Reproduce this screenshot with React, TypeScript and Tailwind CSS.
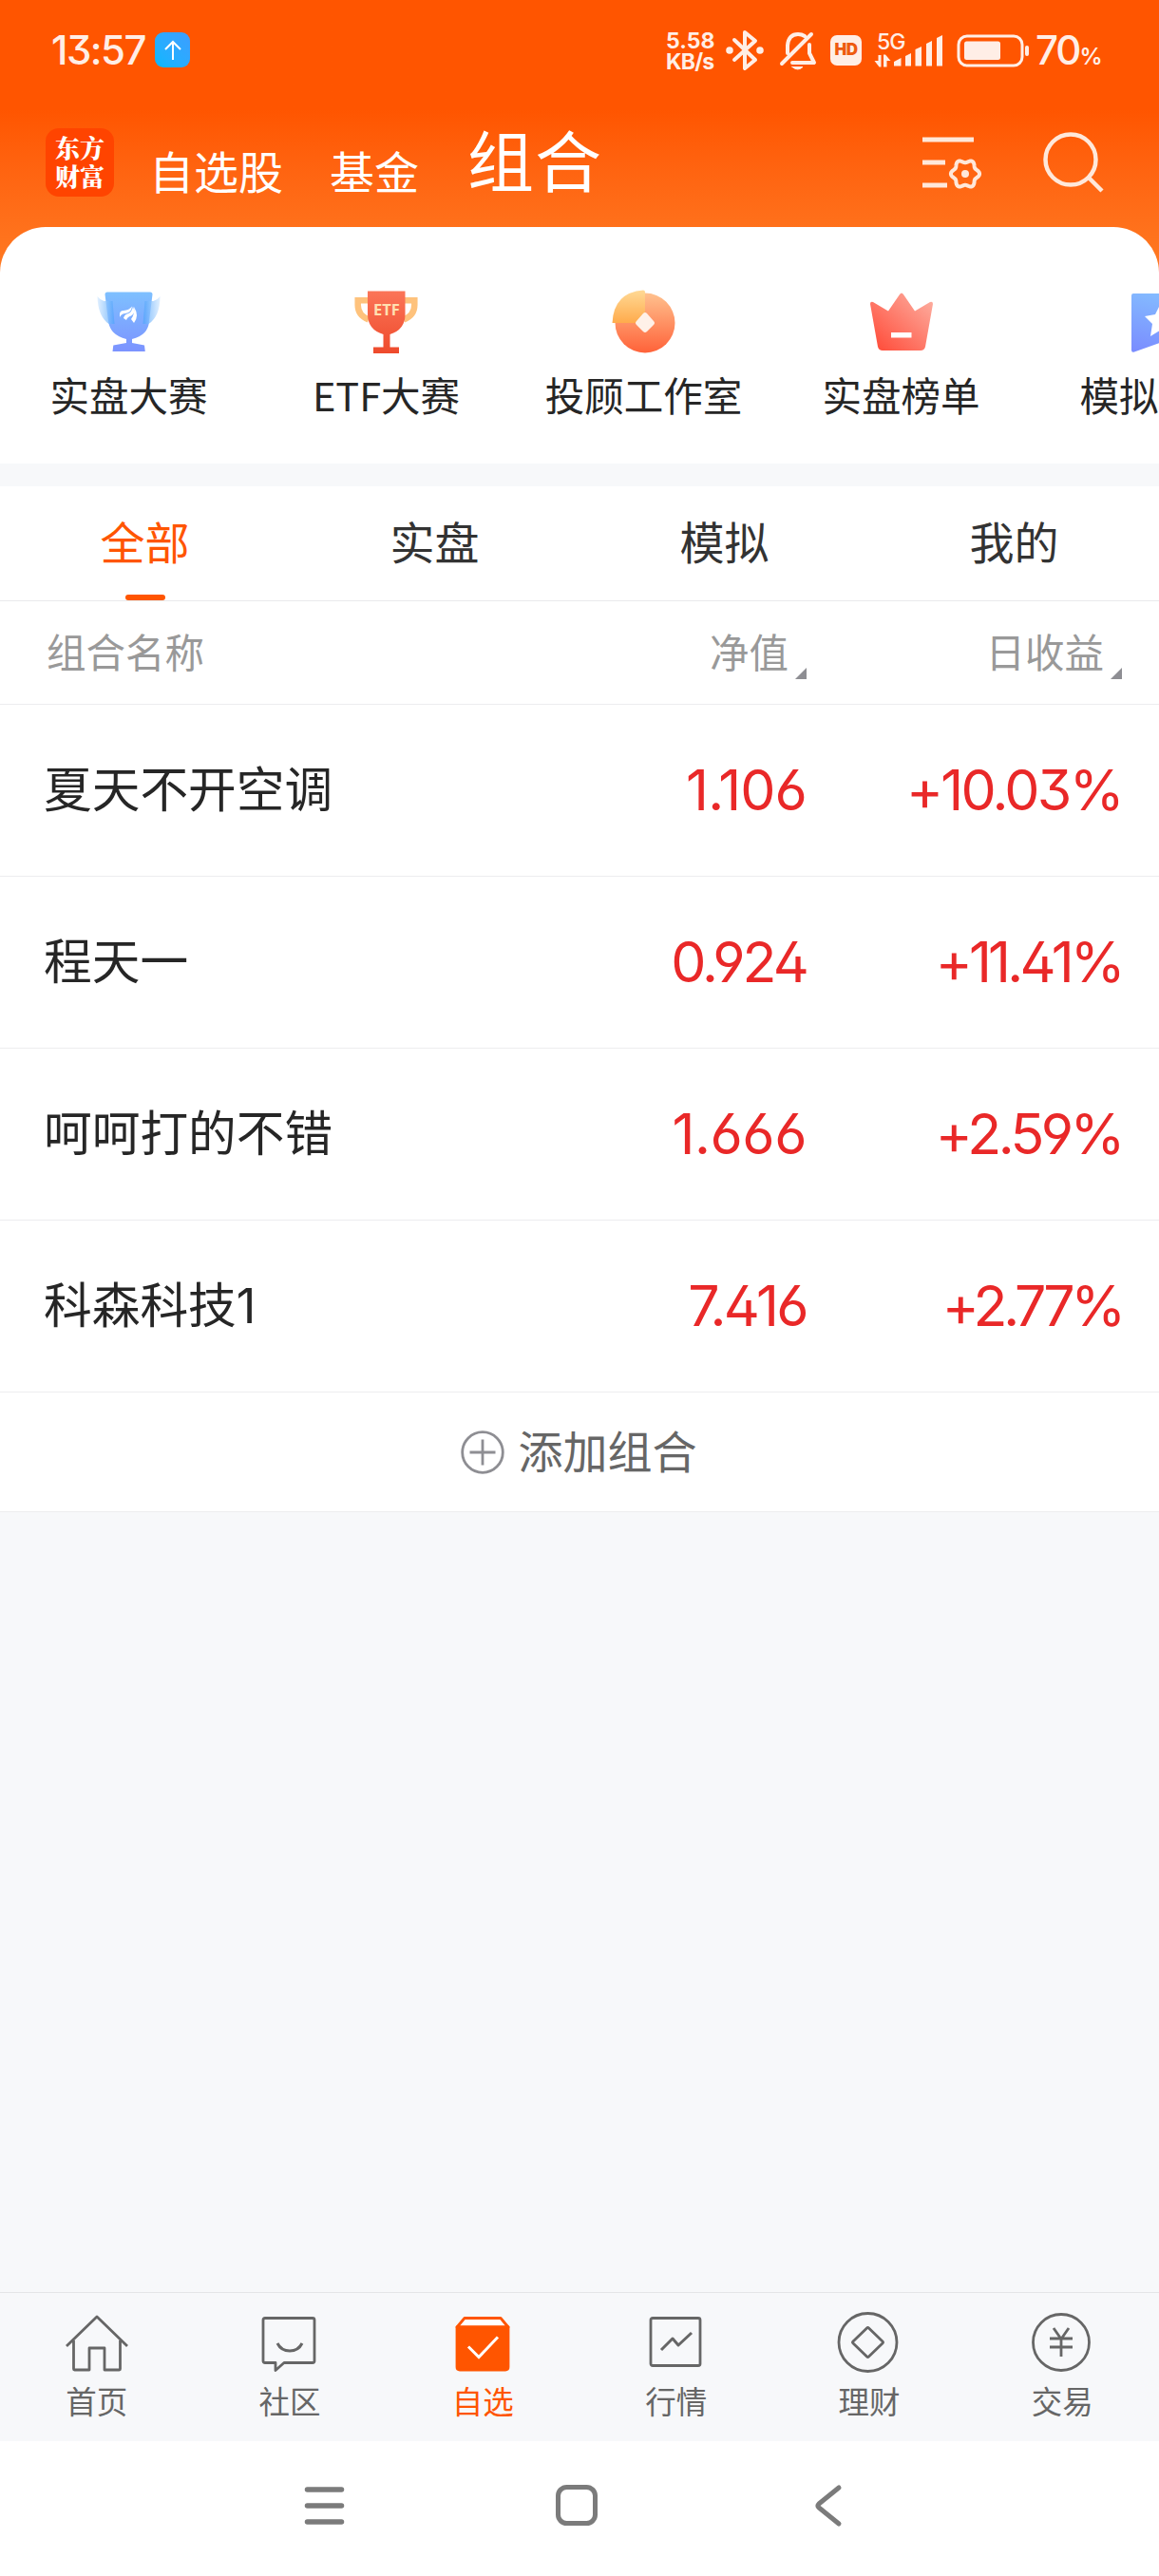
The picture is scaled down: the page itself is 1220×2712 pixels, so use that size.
import type { ReactNode } from 'react';

const quickLinks = [
  { label: '实盘大赛', icon: <BlueTrophy /> },
  { label: 'ETF大赛', icon: <EtfTrophy /> },
  { label: '投顾工作室', icon: <Coin /> },
  { label: '实盘榜单', icon: <Crown /> },
  { label: '模拟大赛', icon: <Flag /> },
];

const tabs = ['全部', '实盘', '模拟', '我的'];

const portfolios = [
  { name: '夏天不开空调', value: '1.106', valueTracking: 'tracking-[-0.9px]', daily: '+10.03%', dailyTracking: 'tracking-[-2.7px]' },
  { name: '程天一', value: '0.924', valueTracking: 'tracking-[-2.9px]', daily: '+11.41%', dailyTracking: 'tracking-[-3.8px]' },
  { name: '呵呵打的不错', value: '1.666', valueTracking: 'tracking-[-0.5px]', daily: '+2.59%', dailyTracking: 'tracking-[-3.5px]' },
  { name: '科森科技1', value: '7.416', valueTracking: 'tracking-[-2.7px]', daily: '+2.77%', dailyTracking: 'tracking-[-4.3px]' },
];

const navItems = [
  { label: '首页', icon: <HomeIcon /> },
  { label: '社区', icon: <ChatIcon /> },
  { label: '自选', icon: <BoxIcon />, active: true },
  { label: '行情', icon: <ChartIcon /> },
  { label: '理财', icon: <DiamondIcon /> },
  { label: '交易', icon: <YuanIcon /> },
];

// Contorno del engranaje: círculo con seis lóbulos
const gearPoints = Array.from({ length: 72 }, (_, i) => {
  const a = (i * Math.PI) / 36;
  const r = 13.4 + 1.7 * Math.cos(6 * a);
  return `${(46 + r * Math.cos(a)).toFixed(2)},${(48 + r * Math.sin(a)).toFixed(2)}`;
}).join(' ');

function BlueTrophy() {
  return (
    <svg className="w-20 h-20" viewBox="0 0 80 80">
      <defs>
        <linearGradient id="cup" x1="0" y1="0" x2="0" y2="1">
          <stop offset="0" stopColor="#7ec0ff" />
          <stop offset="1" stopColor="#7c93ff" />
        </linearGradient>
        <linearGradient id="wingL" x1="0" y1="0" x2="1" y2="0">
          <stop offset="0" stopColor="#d8ebff" />
          <stop offset="1" stopColor="#4fa3fb" />
        </linearGradient>
        <linearGradient id="wingR" x1="1" y1="0" x2="0" y2="0">
          <stop offset="0" stopColor="#d8ebff" />
          <stop offset="1" stopColor="#4fa3fb" />
        </linearGradient>
      </defs>
      <path d="M17 8.500h45q2.500 0 2.500 2.500L61 39q-1 15-18 19v4l13 2.500.8 6.500H22.500l.8-6.500L37 62v-4Q20 54 18 39L14.500 11q0-2.500 2.500-2.500z" fill="url(#cup)" />
      <path d="M6.500 13q3 4 7 5h9l2 24h-6Q7 34 6.500 13z" fill="url(#wingL)" opacity=".75" />
      <path d="M72.500 13q-3 4-7 5h-9l-2 24h6q12-8 12-29z" fill="url(#wingR)" opacity=".75" />
      <path d="M30 32q0-4 4-4 6-.5 9-4.500-1 7-7 7.500-4 0-6 4zM34 36q1-4 4-4.500 5-1.500 6-8 3 7-2 10-4 1-5 4.500zM45 24q3 5 3 9t-3 8l-3-4q4-5 3-13z" fill="#fff" />
    </svg>
  );
}

function EtfTrophy() {
  return (
    <svg className="w-20 h-20" viewBox="0 0 80 80">
      <defs>
        <linearGradient id="etf" x1="0" y1="0" x2="0" y2="1">
          <stop offset="0" stopColor="#fb7558" />
          <stop offset="1" stopColor="#ee4a2c" />
        </linearGradient>
      </defs>
      <path d="M22 17.200H9.700V22q0 11 11.300 15.500M57 17.200h12.300V22q0 11-11.300 15.500" fill="none" stroke="#fec27c" strokeWidth="6.500" />
      <path d="M20 7.500h39.500V32q0 16-16 21v13.500H53V73H26v-6.500h10.500V53Q20 48 20 32z" fill="url(#etf)" />
      <text x="40" y="33" textAnchor="middle" className="font-['Open_Sans',sans-serif] text-[16.500px] font-bold" fill="#ffe0b0">ETF</text>
    </svg>
  );
}

function Coin() {
  return (
    <svg className="w-20 h-20" viewBox="0 0 80 80">
      <defs>
        <linearGradient id="coin" x1="0" y1="0" x2="0" y2="1">
          <stop offset="0" stopColor="#ffc18e" />
          <stop offset="1" stopColor="#ff6239" />
        </linearGradient>
        <linearGradient id="slice" x1="0" y1="0" x2="0" y2="1">
          <stop offset="0" stopColor="#ffd995" />
          <stop offset="1" stopColor="#ffab4c" />
        </linearGradient>
      </defs>
      <circle cx="41" cy="41" r="31.500" fill="url(#coin)" />
      <path d="M41 41H6.500Q8 9 39 6.500q2 0 2 2z" fill="url(#slice)" />
      <path d="M39 31q2-2 4 0l7 8q2 2 0 4l-7 7q-2 2-4 0l-7-7q-2-2 0-4z" fill="#fff1e8" />
    </svg>
  );
}

function Crown() {
  return (
    <svg className="w-20 h-20" viewBox="0 0 80 80">
      <defs>
        <linearGradient id="crown" x1="0" y1="1" x2="1" y2="0">
          <stop offset=".1" stopColor="#ff513f" />
          <stop offset="1" stopColor="#fdb3a5" />
        </linearGradient>
      </defs>
      <path d="M7 21q0-3 3-2l16 9.500L38 11q2-3 4 0l12 17.500L70 19q3-1 3 2l-8 45q-1 4-5 4H20q-4 0-5-4z" fill="url(#crown)" />
      <path d="M29 51h21.500v5.500H29z" fill="#fff" />
    </svg>
  );
}

function Flag() {
  return (
    <svg className="w-20 h-20" viewBox="0 0 80 80">
      <defs>
        <linearGradient id="flag" x1=".4" y1="0" x2=".2" y2="1">
          <stop offset="0" stopColor="#84baff" />
          <stop offset="1" stopColor="#7a8dff" />
        </linearGradient>
      </defs>
      <path d="M13 10h54q2 0 2 2v60L41 62 14 71.500q-3 1-3-2V12q0-2 2-2z" fill="url(#flag)" />
      <path d="M41 22l5 10 11 2-8 8 2 13-10-6-10 6 2-13-8-8 11-2z" fill="#fff" />
    </svg>
  );
}

function NavSvg({ children }: { children: ReactNode }) {
  return (
    <svg className="w-[70px] h-[70px]" viewBox="0 0 70 70" fill="none" stroke="currentColor" strokeWidth="2.800" strokeLinejoin="round">
      {children}
    </svg>
  );
}

function HomeIcon() {
  return (
    <NavSvg>
      <path d="M3 38L35 7l32 31M10.500 32v30q0 1 1 1H27V40h16v23h15.500q1 0 1-1V32" />
    </NavSvg>
  );
}

function ChatIcon() {
  return (
    <NavSvg>
      <path d="M9 8.500h50q2 0 2 2v43q0 2-2 2H29l-9 8v-8H9q-2 0-2-2v-43q0-2 2-2z" />
      <path d="M22 35q4 8 13 8t13-8" strokeWidth="3" />
    </NavSvg>
  );
}

function BoxIcon() {
  return (
    <NavSvg>
      <path d="M16 8.500h38L62 18H8z" fill="#fff" />
      <path d="M8 18h54v42q0 3-3 3H11q-3 0-3-3z" fill="currentColor" />
      <path d="M20 38.500l11 11 20-21" stroke="#fff" strokeWidth="3" strokeLinejoin="miter" />
    </NavSvg>
  );
}

function ChartIcon() {
  return (
    <NavSvg>
      <rect x="8" y="8.500" width="52" height="50" rx="2" />
      <path d="M19 42l12-12 6 7 14-13" strokeWidth="3" />
    </NavSvg>
  );
}

function DiamondIcon() {
  return (
    <NavSvg>
      <circle cx="33.500" cy="34" r="30.500" />
      <path d="M32.500 19q1-1 2 0L49 33q1 1 0 2L34.500 49q-1 1-2 0L18 35q-1-1 0-2z" />
    </NavSvg>
  );
}

function YuanIcon() {
  return (
    <NavSvg>
      <circle cx="34" cy="34" r="29.500" />
      <path d="M26 19l8 11.500L42 19M22 30h24M22 39h24M34 30v19" />
    </NavSvg>
  );
}

function StatusBar() {
  return (
    <div className="flex h-[105px] items-center pl-[54px] pr-[59px] text-[#ffeee6]">
      <span className="w-[109px] whitespace-nowrap font-[Inter,sans-serif] text-[42px] font-medium tracking-[-1.500px] [font-feature-settings:'cv09','ss01']">13:57</span>
      <span className="flex h-[37px] w-[37px] items-center justify-center rounded-[9px] bg-linear-to-tr from-[#00b8ff] to-[#3c9dff]">
        <svg className="h-6 w-5" viewBox="0 0 20 24" fill="none" stroke="#fff" strokeWidth="2">
          <path d="M10 22V3M2 11l8-8 8 8" />
        </svg>
      </span>
      <div className="ml-auto flex items-center">
        <div className="mt-[2px] w-[54px] whitespace-nowrap font-[Inter,sans-serif] text-[23px]/[22px] font-bold">
          <div className="tracking-[0px]">5.58</div>
          <div className="tracking-[-0.8px]">KB/s</div>
        </div>
        {/* bluetooth */}
        <svg className="ml-[9px] h-12 w-10" viewBox="0 0 40 48" fill="none" stroke="currentColor" strokeWidth="4" strokeLinejoin="round" strokeLinecap="round">
          <path d="M9 13l22 21-11 9V5l11 9L9 34" />
          <circle cx="4" cy="24" r="1.800" />
          <circle cx="36" cy="24" r="1.800" />
        </svg>
        {/* muted bell */}
        <svg className="ml-4 h-12 w-10" viewBox="0 0 40 48" fill="none" stroke="currentColor" strokeWidth="4" strokeLinejoin="round" strokeLinecap="round">
          <path d="M3 38L34 7M9 27v-8Q10 7 20 7q4 0 7 2M32 18v9l5 10H14" />
          <path d="M14 41.500h11q-5 5-11 0z" fill="currentColor" strokeWidth="1" />
        </svg>
        <span className="ml-[14px] flex h-8 w-[33px] items-center justify-center rounded-[7px] bg-[#ffeee6] font-[Inter,sans-serif] text-[17px] font-black tracking-[-0.500px] text-[#ee5a10]">HD</span>
        {/* signal */}
        <svg className="ml-[10px] h-12 w-[75px]" viewBox="0 0 75 48" fill="currentColor">
          <text x="6" y="22.500" className="font-[Inter,sans-serif] text-[23px] font-medium tracking-[-1px]">5G</text>
          <path d="M3.500 35h4v-6h3v12.500h-2zM13 28.500h2l5.500 6.500h-4v6.500H13z" />
          <path d="M24 36l7.500-4v8.500H24zM36 30l6-3v13.500h-6zM46.500 23l6.500-3v20.500h-6.500zM58 17l6-3v26.500h-6zM69 11l6-3v32.500h-6z" />
        </svg>
        {/* battery */}
        <svg className="ml-[13px] h-12 w-20" viewBox="0 0 80 48">
          <rect x="4" y="9" width="67" height="31" rx="9" fill="none" stroke="currentColor" strokeWidth="3" />
          <rect x="10" y="14.500" width="38" height="19.500" rx="2.500" fill="currentColor" />
          <rect x="74" y="19" width="4" height="11" rx="2" fill="currentColor" />
        </svg>
        <span className="ml-[5px] w-[71px] whitespace-nowrap font-[Inter,sans-serif] text-[42px] font-medium tracking-[-2px]">
          70<span className="text-[24px] font-semibold">%</span>
        </span>
      </div>
    </div>
  );
}

function Header() {
  return (
    <div className="flex h-[134px] pl-12 pr-[58px] text-white">
      <div className="mt-[30px] h-[72px] w-[72px] rounded-[14px] bg-[#ff4400] pt-[5px] text-center font-['Noto_Serif_CJK_SC','Noto_Sans_CJK_SC',sans-serif] text-[26px]/[30px] font-black">
        <div>东方</div>
        <div>财富</div>
      </div>
      <div className="-mt-[1px] ml-[37px] flex items-baseline text-[47px] leading-[134px]">
        <span className="w-[190px]">自选股</span>
        <span className="w-[145px]">基金</span>
        <span className="-mt-[2px] -translate-y-[2px] text-[70px] tracking-[1px]">组合</span>
      </div>
      <svg className="ml-auto mt-[30px] h-[70px] w-[66px] text-[#ffe8da]" viewBox="0 0 66 70" fill="none" stroke="currentColor" strokeWidth="5">
        <path d="M1 12h54M1 36h24M1 60h26" />
        <polygon points={gearPoints} strokeWidth="4" strokeLinejoin="round" />
        <circle cx="46" cy="48" r="4" fill="currentColor" stroke="none" />
      </svg>
      <svg className="ml-[62px] mt-[30px] h-[70px] w-16 text-[#ffe8da]" viewBox="0 0 64 70" fill="none" stroke="currentColor" strokeWidth="4.500">
        <circle cx="29" cy="33" r="26.500" />
        <path d="M48 52l14 14" />
      </svg>
    </div>
  );
}

export default function App() {
  return (
    <div className="flex h-[2712px] w-[1220px] flex-col overflow-hidden bg-[#f7f8fa] font-['Noto_Sans_CJK_SC',sans-serif] text-[#262626]">
      <div className="h-[288px] shrink-0 bg-linear-to-b from-[#ff5500] from-40% to-[#ff7a22]">
        <StatusBar />
        <Header />
      </div>

      {/* Accesos rápidos */}
      <div className="-mt-[49px] flex h-[249px] shrink-0 overflow-hidden rounded-t-[48px] bg-white pt-[60px]">
        {quickLinks.map((item) => (
          <div key={item.label} className="flex w-[271px] shrink-0 flex-col items-center">
            {item.icon}
            <span className="mt-[6px] text-[41.500px]/[60px]">{item.label}</span>
          </div>
        ))}
      </div>

      <div className="mt-6 flex h-[121px] shrink-0 border-b border-[#e9eaec] bg-white text-[47px] text-[#333]">
        {tabs.map((tab, i) => (
          <div key={tab} className="flex flex-1 flex-col items-center justify-between">
            <span className={i === 0 ? 'leading-[113px] text-[#ff5500]' : 'leading-[113px]'}>{tab}</span>
            {i === 0 && <span className="h-[6px] w-[42px] shrink-0 rounded-full bg-[#ff5500]" />}
          </div>
        ))}
      </div>

      <div className="flex h-[109px] shrink-0 items-center border-b border-[#ededef] bg-white pl-[49px] pr-[39px] text-[41.500px] text-[#999]">
        <span className="flex-1 -mt-1">组合名称</span>
        <SortLabel text="净值" />
        <div className="w-[332px]">
          <SortLabel text="日收益" />
        </div>
      </div>

      {portfolios.map((p) => (
        <div key={p.name} className="flex h-[181px] shrink-0 items-center border-b border-[#ededef] bg-white pl-[46px] pr-[39px]">
          <span className="flex-1 font-[Inter,'Noto_Sans_CJK_SC',sans-serif] text-[50.700px]">{p.name}</span>
          <Figure text={p.value} tracking={p.valueTracking} />
          <div className="w-[332px] text-right">
            <Figure text={p.daily} tracking={p.dailyTracking} />
          </div>
        </div>
      ))}

      <div className="flex h-[126px] shrink-0 items-center justify-center border-b border-[#ededef] bg-white pr-[2px] text-[47px] text-[#666]">
        <svg className="mr-[15px] h-[46px] w-[46px]" viewBox="0 0 46 46" fill="none" stroke="#8e8e93" strokeWidth="2.800">
          <circle cx="23" cy="23" r="21.300" />
          <path d="M9.500 23h27M23 9.500v27" />
        </svg>
        <span className="-mt-[5px]">添加组合</span>
      </div>

      <div className="mt-auto flex h-[157px] shrink-0 border-t border-[#e4e5e7] bg-[#f7f8fa] text-[#666]">
        {navItems.map((item) => (
          <div key={item.label} className={item.active ? 'flex flex-1 flex-col items-center pt-[18px] text-[#ff5500]' : 'flex flex-1 flex-col items-center pt-[18px]'}>
            {item.icon}
            <span className="-mt-[2px] text-[32.500px]/[54px]">{item.label}</span>
          </div>
        ))}
      </div>

      {/* Barra del sistema */}
      <div className="flex h-[142px] shrink-0 bg-white pl-[317px] pt-[44px] text-[#7b7b7b]">
        <svg className="h-12 w-12" viewBox="0 0 48 48" stroke="currentColor" strokeWidth="5.500" strokeLinecap="round">
          <path d="M6.500 7h36M6.500 24h36M6.500 41h36" />
        </svg>
        <svg className="ml-[218px] h-12 w-12" viewBox="0 0 48 48" fill="none" stroke="currentColor" strokeWidth="5">
          <rect x="4.500" y="4.500" width="39" height="38" rx="9" />
        </svg>
        <svg className="ml-[220px] h-12 w-12" viewBox="0 0 48 48" fill="none" stroke="currentColor" strokeWidth="5" strokeLinecap="round" strokeLinejoin="round">
          <path d="M32 5L11 22q-2 2 0 4l21 17" />
        </svg>
      </div>
    </div>
  );
}

function SortLabel({ text }: { text: string }) {
  return (
    <div className="flex items-center justify-end">
      <span className="-mt-1">{text}</span>
      <svg className="ml-[7px] mt-[44px] h-3 w-3" viewBox="0 0 12 12" fill="#8e8e93">
        <path d="M12 0v12H0z" />
      </svg>
    </div>
  );
}

function Figure({ text, tracking }: { text: string; tracking: string }) {
  return <span className={`font-[Inter,sans-serif] text-[59px] text-[#e92828] [font-feature-settings:'cv09','ss01'] ${tracking}`}>{text}</span>;
}
